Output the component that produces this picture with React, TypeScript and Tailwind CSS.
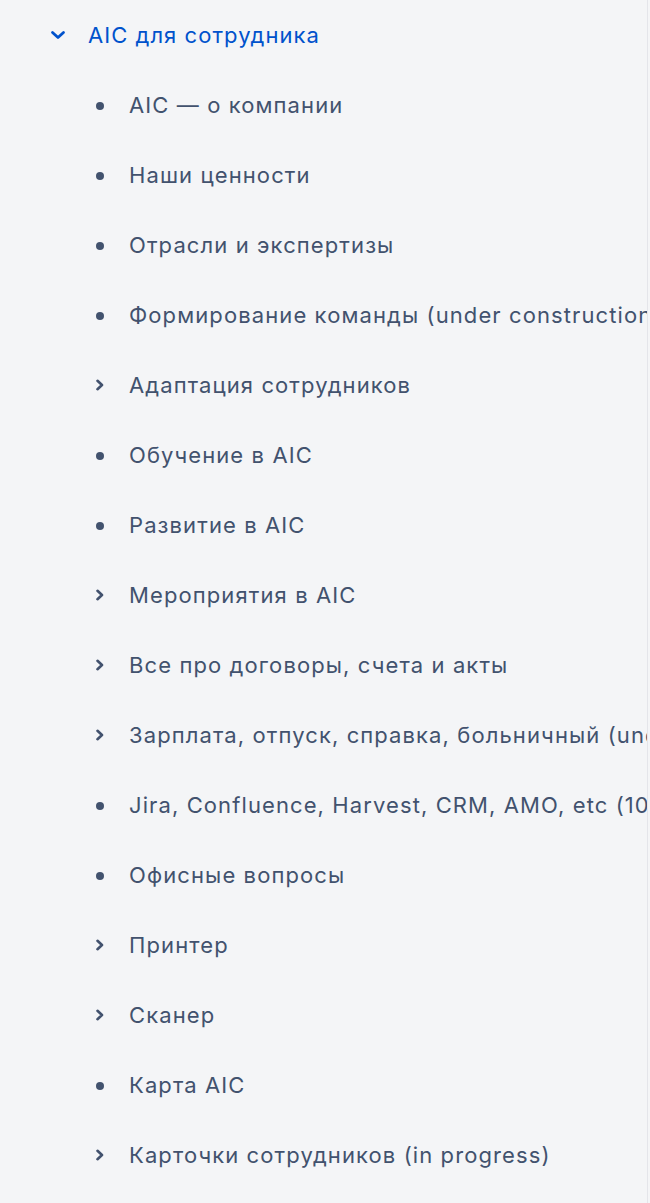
import React from "react";

const items: { label: string; kind: "dot" | "chev" }[] = [
  { label: "AIC — о компании", kind: "dot" },
  { label: "Наши ценности", kind: "dot" },
  { label: "Отрасли и экспертизы", kind: "dot" },
  { label: "Формирование команды (under construction)", kind: "dot" },
  { label: "Адаптация сотрудников", kind: "chev" },
  { label: "Обучение в AIC", kind: "dot" },
  { label: "Развитие в AIC", kind: "dot" },
  { label: "Мероприятия в AIC", kind: "chev" },
  { label: "Все про договоры, счета и акты", kind: "chev" },
  { label: "Зарплата, отпуск, справка, больничный (under construction)", kind: "chev" },
  { label: "Jira, Confluence, Harvest, CRM, AMO, etc (10)", kind: "dot" },
  { label: "Офисные вопросы", kind: "dot" },
  { label: "Принтер", kind: "chev" },
  { label: "Сканер", kind: "chev" },
  { label: "Карта AIC", kind: "dot" },
  { label: "Карточки сотрудников (in progress)", kind: "chev" },
];

function ChevRight() {
  return (
    <svg width="10" height="12" viewBox="0 0 10 12" fill="none" className="shrink-0">
      <path d="M2.5 1.8 L7 6 L2.5 10.2" stroke="#42526e" strokeWidth="2.6" strokeLinecap="round" strokeLinejoin="round" />
    </svg>
  );
}

function ChevDown() {
  return (
    <svg width="16" height="10" viewBox="0 0 16 10" fill="none" className="shrink-0">
      <path d="M2.5 2.5 L8 7.5 L13.5 2.5" stroke="#0052cc" strokeWidth="2.8" strokeLinecap="round" strokeLinejoin="round" />
    </svg>
  );
}

export default function App() {
  return (
    <div className="w-[650px] h-[1203px] bg-[#f4f5f7] overflow-hidden" style={{ fontFamily: "Inter, 'Noto Sans', sans-serif" }}>
      <div className="w-[648px] h-full border-r border-[#e4e5ea] overflow-hidden">
        <div className="flex items-center h-[70px] pl-[50px]">
          <div className="w-[38px] shrink-0 flex items-center">
            <ChevDown />
          </div>
          <span className="text-[22px] text-[#0052cc] whitespace-nowrap tracking-[1.05px]">AIC для сотрудника</span>
        </div>
        <ul className="flex flex-col">
          {items.map((it) => (
            <li key={it.label} className="flex items-center h-[70px] pl-[95px] whitespace-nowrap">
              <div className="w-[34px] shrink-0 flex items-center">
                {it.kind === "dot" ? (
                  <span className="block w-[8px] h-[8px] rounded-full bg-[#42526e] ml-[1px] mt-[2px]" />
                ) : (
                  <ChevRight />
                )}
              </div>
              <span className="text-[22px] text-[#42526e] tracking-[1.1px]">{it.label}</span>
            </li>
          ))}
        </ul>
      </div>
    </div>
  );
}
